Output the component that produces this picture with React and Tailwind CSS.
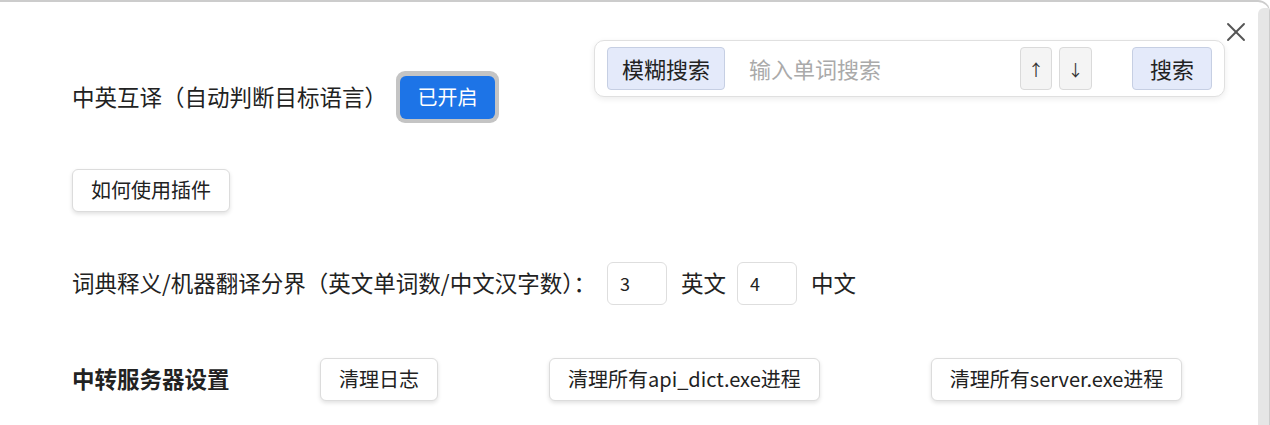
import { X } from 'lucide-react'

const font = { fontFamily: '"Noto Sans CJK SC", "Noto Sans", sans-serif' }

function WhiteBtn({ children }) {
    return (
        <button className="h-[43px] px-[18px] rounded-[6px] border border-[#dcdcdc] bg-white text-[20px] text-[#222] shadow-[0_2px_4px_rgba(0,0,0,0.12)] leading-none whitespace-nowrap">
            {children}
        </button>
    )
}

export default function App() {
    return (
        <div className="h-[425px] w-[1270px] overflow-hidden bg-white" style={font}>
            <div className="relative flex h-full border-t-2 border-r border-[#cccccc] rounded-tr-[12px]">
                <div className="flex-1 flex flex-col pl-[72px] pt-[69px] text-[22.5px] text-[#222]">
                    {/* row 1 */}
                    <div className="flex items-center h-[52px]">
                        <span className="w-[324px] shrink-0 whitespace-nowrap">中英互译（自动判断目标语言）</span>
                        <button className="h-[52px] px-[4px] rounded-[9px] bg-[#c4c4c4] flex items-center">
                            <span className="h-[43px] w-[95px] rounded-[6px] bg-[#1d74e7] text-white text-[20px] flex items-center justify-center">已开启</span>
                        </button>
                    </div>

                    {/* row 2 */}
                    <div className="flex items-center h-[52px] mt-[41px]">
                        <WhiteBtn>如何使用插件</WhiteBtn>
                    </div>

                    {/* row 3 */}
                    <div className="flex items-center h-[52px] mt-[41px]">
                        <span className="w-[535px] shrink-0 whitespace-nowrap">词典释义/机器翻译分界（英文单词数/中文汉字数）：</span>
                        <input
                            defaultValue="3"
                            className="h-[43px] w-[60px] rounded-[6px] border border-[#dedede] px-[12px] text-[18px] text-[#222] outline-none"
                        />
                        <span className="ml-[14px]">英文</span>
                        <input
                            defaultValue="4"
                            className="ml-[11px] h-[43px] w-[60px] rounded-[6px] border border-[#dedede] px-[12px] text-[18px] text-[#222] outline-none"
                        />
                        <span className="ml-[14px]">中文</span>
                    </div>

                    {/* row 4 */}
                    <div className="flex items-center h-[52px] mt-[44px]">
                        <span className="w-[248px] shrink-0 font-bold whitespace-nowrap">中转服务器设置</span>
                        <div className="flex items-center gap-[111px]">
                            <WhiteBtn>清理日志</WhiteBtn>
                            <WhiteBtn>清理所有api_dict.exe进程</WhiteBtn>
                            <WhiteBtn>清理所有server.exe进程</WhiteBtn>
                        </div>
                    </div>
                </div>

                {/* scrollbar track */}
                <div className="w-[11px] mt-[6px] bg-[#e6e6e6] rounded-tl-[6px]" />

                {/* floating search bar */}
                <div className="absolute left-[594px] top-[38px] w-[631px] h-[57px] rounded-[10px] border border-[#e0e0e0] bg-white shadow-[0_2px_6px_rgba(0,0,0,0.08)] flex items-center px-[12px]">
                    <button className="h-[43px] w-[118px] rounded-[4px] border border-[#c6cfe3] bg-[#e4eafa] text-[22px] text-[#222]">模糊搜索</button>
                    <input
                        placeholder="输入单词搜索"
                        className="ml-[24px] w-[260px] text-[22px] text-[#222] placeholder:text-[#aaaaaa] outline-none bg-transparent"
                    />
                    <button className="ml-auto h-[43px] w-[32px] rounded-[4px] border border-[#dadada] bg-[#f4f4f4] text-[16px] text-[#333]">↑</button>
                    <button className="ml-[7px] h-[43px] w-[33px] rounded-[4px] border border-[#dadada] bg-[#f4f4f4] text-[16px] text-[#333]">↓</button>
                    <button className="ml-[40px] h-[43px] w-[80px] rounded-[4px] border border-[#c6cfe3] bg-[#e4eafa] text-[22px] text-[#222]">搜索</button>
                </div>

                {/* close */}
                <button className="absolute left-[1220px] top-[14px] text-[#555]">
                    <X className="w-[32px] h-[32px]" strokeWidth={1.4} />
                </button>
            </div>
        </div>
    )
}
